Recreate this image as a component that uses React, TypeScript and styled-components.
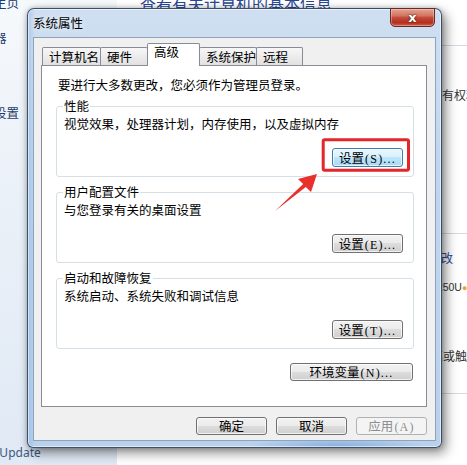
import React from "react";
import styled, { createGlobalStyle } from "styled-components";

const GlobalStyle = createGlobalStyle`
  html, body { margin: 0; padding: 0; }
  body {
    width: 467px; height: 465px; overflow: hidden; background: #fff;
    font-family: "Noto Sans CJK SC", "Noto Sans", sans-serif;
  }
`;

const Page = styled.div`
  position: relative;
  width: 467px;
  height: 465px;
  overflow: hidden;
  display: grid;
  grid-template-columns: 117px 1fr;
  background: #fff;
`;

const Sidebar = styled.aside`
  display: flex;
  flex-direction: column;
  overflow: hidden;
  padding-bottom: 4px;
  background: linear-gradient(180deg, #f6f9fc 0%, #ebf1f8 40%, #e0e9f5 100%);
`;

const SideLinks = styled.nav`
  display: flex;
  flex-direction: column;
  margin: -10px 0 0 -56px;
`;

const SideLink = styled.a<{ $home?: boolean }>`
  display: block;
  height: 25px;
  line-height: 25px;
  font-size: 12.5px;
  color: #1e3c6e;
  white-space: nowrap;
  margin-bottom: ${(p) => (p.$home ? 10 : 0)}px;
`;

const SeeAlso = styled.a`
  margin-top: auto;
  margin-left: -55px;
  line-height: 16px;
  font-family: "Noto Sans", sans-serif;
  font-size: 12px;
  color: #3d5a80;
  white-space: nowrap;
`;

const Main = styled.main`
  display: flex;
  flex-direction: column;
  overflow: hidden;
`;

const Heading = styled.h1`
  margin: -7px 0 0 23px;
  font-size: 16px;
  line-height: 20px;
  font-weight: normal;
  color: #2a4795;
  white-space: nowrap;
`;

const Section = styled.section<{ $h: number; $mt?: number }>`
  flex: none;
  box-sizing: border-box;
  height: ${(p) => p.$h}px;
  margin-top: ${(p) => p.$mt ?? 0}px;
  border-top: 1px solid #d3dae3;
  display: flex;
  flex-direction: column;
`;

const Info = styled.div<{ $x: number; $mt: number; $link?: boolean; $latin?: boolean }>`
  margin: ${(p) => p.$mt}px 0 0 ${(p) => p.$x}px;
  font-family: ${(p) => (p.$latin ? '"Liberation Sans", sans-serif' : "inherit")};
  font-size: ${(p) => (p.$latin ? 10.5 : 12)}px;
  line-height: 16px;
  white-space: nowrap;
  color: ${(p) => (p.$link ? "#2a4795" : "#333")};
`;

const Dot = styled.span`
  color: #f0a030;
  font-size: 9px;
`;

const Window = styled.div`
  position: absolute;
  left: 27px;
  top: 8px;
  z-index: 2;
  width: 415px;
  height: 440px;
  box-sizing: border-box;
  display: flex;
  flex-direction: column;
  padding: 0 5px 6px 5px;
  border: 1px solid rgba(38, 56, 82, 0.85);
  border-radius: 7px 7px 6px 6px;
  background:
    linear-gradient(90deg, rgba(110, 165, 225, 0.35) 0, rgba(110, 165, 225, 0) 7px),
    radial-gradient(ellipse 90px 10px at 75% 100%, rgba(90, 145, 210, 0.55), rgba(90, 145, 210, 0)),
    linear-gradient(180deg, #cfdff1 0%, #c0d6ee 35%, #b9d1eb 100%);
  box-shadow:
    inset 0 0 0 1px rgba(255, 255, 255, 0.55),
    4px 5px 12px rgba(0, 0, 0, 0.45),
    0 0 5px rgba(0, 0, 0, 0.25);
`;

const TitleBar = styled.div`
  flex: none;
  height: 28px;
  display: flex;
  align-items: flex-start;
`;

const Title = styled.span`
  font-size: 12.5px;
  line-height: 28px;
  color: #000;
  text-shadow: 0 0 6px rgba(255, 255, 255, 0.9);
`;

const CloseButton = styled.button`
  width: 45px;
  height: 19px;
  margin: -1px 1px 0 auto;
  padding: 0;
  box-sizing: border-box;
  border: 1px solid #6a2a20;
  border-radius: 0 0 5px 5px;
  background: linear-gradient(180deg, #e3a192 0%, #d47763 38%, #c4473a 52%, #b3301f 80%, #cf6049 100%);
  box-shadow: inset 0 0 0 1px rgba(255, 255, 255, 0.3);
  color: #fff;
  font-family: "DejaVu Sans", sans-serif;
  font-weight: bold;
  font-size: 13px;
  line-height: 15px;
  text-shadow: 0 0 2px #4a140c, 0 0 1px #4a140c;
`;

const Client = styled.div`
  flex: 1;
  display: flex;
  flex-direction: column;
  padding: 5px 8px 5px 7px;
  background: #f0f0f0;
  border: 1px solid #8ea3bb;
`;

const TabStrip = styled.div`
  flex: none;
  height: 22px;
  margin-left: 1px;
  display: flex;
  align-items: flex-end;
  position: relative;
  z-index: 1;
`;

const Tab = styled.div<{ $w: number; $active?: boolean }>`
  flex: none;
  box-sizing: border-box;
  width: ${(p) => p.$w}px;
  height: ${(p) => (p.$active ? 23 : 18)}px;
  margin-left: -1px;
  margin-bottom: ${(p) => (p.$active ? -1 : 0)}px;
  padding-left: 6px;
  border: 1px solid #898c95;
  border-bottom: none;
  border-radius: 2px 2px 0 0;
  position: relative;
  z-index: ${(p) => (p.$active ? 2 : 1)};
  background: ${(p) => (p.$active ? "#fff" : "linear-gradient(180deg, #f7f7f7 0%, #ececec 50%, #e1e1e1 100%)")};
  font-size: 12.5px;
  line-height: ${(p) => (p.$active ? 16 : 17)}px;
  color: #000;
  white-space: nowrap;
  &:first-child { margin-left: 0; }
`;

const Panel = styled.div`
  flex: none;
  height: 342px;
  box-sizing: border-box;
  display: flex;
  flex-direction: column;
  padding: 11px 12px 0 14px;
  background: #fff;
  border: 1px solid #898c95;
`;

const Intro = styled.p`
  margin: 0 0 0 2px;
  font-size: 12.5px;
  line-height: 16px;
  color: #000;
  white-space: nowrap;
`;

const Group = styled.fieldset<{ $mt: number }>`
  margin: ${(p) => p.$mt}px 0 0 0;
  padding: 0 10px 9px 7px;
  min-width: 0;
  border: 1px solid #d5dfe5;
  border-radius: 3px;
  display: flex;
  flex-direction: column;
`;

const Legend = styled.legend`
  padding: 0 1px;
  margin-left: -1px;
  font-size: 12.5px;
  line-height: 16px;
  color: #000;
`;

const Desc = styled.div`
  margin-top: 2px;
  font-size: 12.5px;
  line-height: 16px;
  color: #000;
  white-space: nowrap;
`;

const ButtonRow = styled.div<{ $mt: number; $gap?: number; $pr?: number }>`
  display: flex;
  justify-content: flex-end;
  gap: ${(p) => p.$gap ?? 0}px;
  margin-top: ${(p) => p.$mt}px;
  padding-right: ${(p) => p.$pr ?? 0}px;
`;

type Variant = "normal" | "focus" | "disabled";

const Button = styled.button<{ $w: number; $h: number; $variant?: Variant }>`
  flex: none;
  width: ${(p) => p.$w}px;
  height: ${(p) => p.$h}px;
  box-sizing: border-box;
  padding: 0;
  border-radius: 3px;
  font-family: "Noto Sans CJK SC", "Noto Sans", sans-serif;
  font-size: 12.5px;
  line-height: ${(p) => p.$h - 2}px;
  white-space: nowrap;
  border: 1px solid
    ${(p) => (p.$variant === "focus" ? "#3c7fb1" : p.$variant === "disabled" ? "#adb2b5" : "#707070")};
  color: ${(p) => (p.$variant === "disabled" ? "#8d8d8d" : "#000")};
  background: ${(p) =>
    p.$variant === "focus"
      ? "linear-gradient(180deg, #eaf6fd 0%, #d9f0fc 50%, #bee6fd 50%, #a7d9f5 100%)"
      : p.$variant === "disabled"
      ? "#f4f4f4"
      : "linear-gradient(180deg, #f2f2f2 0%, #ebebeb 50%, #dddddd 50%, #cfcfcf 100%)"};
  box-shadow: inset 0 0 0 1px
    ${(p) => (p.$variant === "disabled" ? "rgba(255,255,255,0)" : "rgba(255,255,255,0.7)")};
`;

const Key = styled.span`
  font-family: "Liberation Serif", serif;
  font-size: 12px;
  letter-spacing: 1.2px;
  margin-left: 1px;
`;

const Overlay = styled.svg`
  position: absolute;
  left: 0;
  top: 0;
  z-index: 3;
  width: 467px;
  height: 465px;
  pointer-events: none;
`;

const tabs = [
  { label: "计算机名", w: 59 },
  { label: "硬件", w: 48 },
  { label: "高级", w: 53, active: true },
  { label: "系统保护", w: 58 },
  { label: "远程", w: 47 },
];

const groups: { title: string; desc: string; key: string; mt: number; variant: Variant }[] = [
  { title: "性能", desc: "视觉效果，处理器计划，内存使用，以及虚拟内存", key: "(S)...", mt: 5, variant: "focus" },
  { title: "用户配置文件", desc: "与您登录有关的桌面设置", key: "(E)...", mt: 7, variant: "normal" },
  { title: "启动和故障恢复", desc: "系统启动、系统失败和调试信息", key: "(T)...", mt: 7, variant: "normal" },
];

export default function App() {
  return (
    <>
      <GlobalStyle />
      <Page>
        <Sidebar>
          <SideLinks>
            <SideLink $home>控制面板主页</SideLink>
            <SideLink>设备管理器</SideLink>
            <SideLink>远程设置</SideLink>
            <SideLink>系统保护</SideLink>
            <SideLink>高级系统设置</SideLink>
          </SideLinks>
          <SeeAlso>Windows Update</SeeAlso>
        </Sidebar>

        <Main>
          <Heading>查看有关计算机的基本信息</Heading>
          <Section $h={188} $mt={32}>
            <Info $x={289} $mt={41}>保留所有权利。</Info>
          </Section>
          <Section $h={160}>
            <Info $x={312} $mt={16} $link>更改</Info>
            <Info $x={314} $mt={13} $latin>
              4250U<Dot>●</Dot>
            </Info>
            <Info $x={314} $mt={52}>笔或触控输入</Info>
          </Section>
          <Section $h={72} />
        </Main>

        <Window>
          <TitleBar>
            <Title>系统属性</Title>
            <CloseButton>x</CloseButton>
          </TitleBar>
          <Client>
            <TabStrip>
              {tabs.map((t) => (
                <Tab key={t.label} $w={t.w} $active={t.active}>
                  {t.label}
                </Tab>
              ))}
            </TabStrip>
            <Panel>
              <Intro>要进行大多数更改，您必须作为管理员登录。</Intro>
              {groups.map((g) => (
                <Group key={g.title} $mt={g.mt}>
                  <Legend>{g.title}</Legend>
                  <Desc>{g.desc}</Desc>
                  <ButtonRow $mt={16}>
                    <Button $w={71} $h={19} $variant={g.variant}>
                      设置<Key>{g.key}</Key>
                    </Button>
                  </ButtonRow>
                </Group>
              ))}
              <ButtonRow $mt={14} $pr={1}>
                <Button $w={123} $h={18}>
                  环境变量<Key>(N)...</Key>
                </Button>
              </ButtonRow>
            </Panel>
            <ButtonRow $mt={10} $gap={9}>
              <Button $w={71} $h={18}>确定</Button>
              <Button $w={71} $h={18}>取消</Button>
              <Button $w={71} $h={18} $variant="disabled">
                应用<Key>(A)</Key>
              </Button>
            </ButtonRow>
          </Client>
        </Window>

        <Overlay viewBox="0 0 467 465">
          <rect x="323.2" y="139.8" width="85.3" height="30.4" rx="1.5" fill="none" stroke="#e3262a" strokeWidth="3" />
          <polygon
            points="275,211 303.2,184 298,179 317,174 311,192 305.8,187"
            fill="#e8302c"
          />
        </Overlay>
      </Page>
    </>
  );
}
